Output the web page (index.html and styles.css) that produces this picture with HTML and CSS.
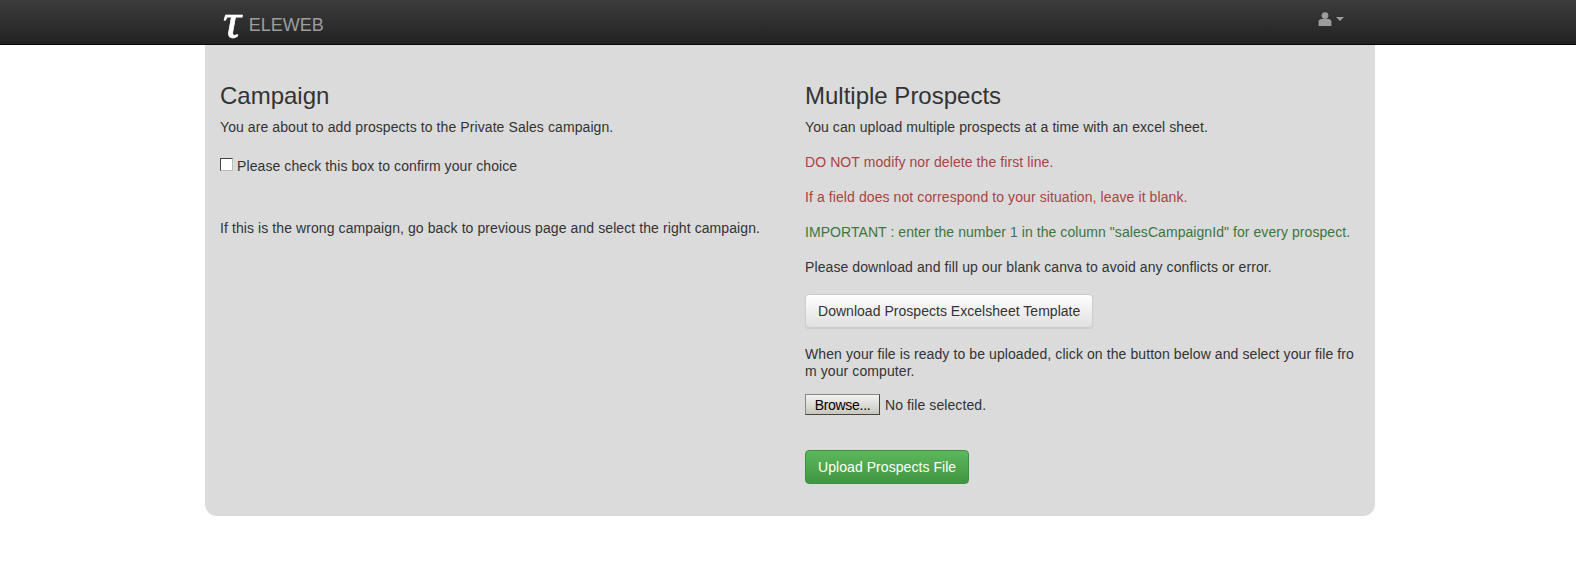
FILE: index.html
```html
<!DOCTYPE html>
<html lang="en">
<head>
<meta charset="utf-8">
<title>Teleweb</title>
<link rel="stylesheet" href="styles.css">
</head>
<body>
<nav class="navbar">
  <div class="nav-inner">
    <a class="brand"><span class="tau">τ</span><span class="brand-text">ELEWEB</span></a>
    <a class="user">
      <svg class="user-icon" viewBox="0 0 14 14" width="14" height="14"><circle cx="7" cy="3.6" r="3.4" fill="#9d9d9d"/><path d="M0.6 14V9.8C0.6 8 2 7 3.6 7h6.8c1.6 0 3 1 3 2.8V14z" fill="#9d9d9d"/></svg>
      <span class="caret"></span>
    </a>
  </div>
</nav>
<main class="panel">
  <section class="col">
    <h3>Campaign</h3>
    <p>You are about to add prospects to the Private Sales campaign.</p>
    <label class="confirm"><input type="checkbox" class="check"><span>Please check this box to confirm your choice</span></label>
    <p class="wrong">If this is the wrong campaign, go back to previous page and select the right campaign.</p>
  </section>
  <section class="col">
    <h3>Multiple Prospects</h3>
    <p>You can upload multiple prospects at a time with an excel sheet.</p>
    <p class="danger">DO NOT modify nor delete the first line.</p>
    <p class="danger">If a field does not correspond to your situation, leave it blank.</p>
    <p class="success">IMPORTANT : enter the number 1 in the column "salesCampaignId" for every prospect.</p>
    <p class="before-btn">Please download and fill up our blank canva to avoid any conflicts or error.</p>
    <button class="btn btn-default">Download Prospects Excelsheet Template</button>
    <p class="ready">When your file is ready to be uploaded, click on the button below and select your file from your computer.</p>
    <div class="file-row"><button class="browse">Browse...</button><span>No file selected.</span></div>
    <button class="btn btn-success">Upload Prospects File</button>
  </section>
</main>
</body>
</html>
```
FILE: styles.css
```css
* { box-sizing: border-box; }
html, body { margin: 0; padding: 0; background: #fff; }
body { font-family: "Liberation Sans", Arial, sans-serif; font-size: 14px; line-height: 20px; color: #333; letter-spacing: .09px; }

.navbar { height: 45px; background: linear-gradient(to bottom, #3c3c3c 0%, #222 100%); border-bottom: 1px solid #080808; }
.nav-inner { width: 1170px; margin-left: 205px; height: 44px; display: flex; justify-content: space-between; }
.brand { display: flex; align-items: flex-start; padding-left: 19px; }
.tau { font-family: "Liberation Serif", serif; font-style: italic; font-size: 44px; line-height: 44px; color: #fff; -webkit-text-stroke: .6px #fff; letter-spacing: 0; transform: scale(1.14); }
.brand-text { font-size: 18px; line-height: 20px; margin: 15px 0 0 9px; color: #9d9d9d; letter-spacing: 0; }
.user { display: flex; align-items: center; height: 38px; padding-right: 31px; gap: 4px; }
.user-icon { display: block; }
.caret { width: 0; height: 0; border-top: 4px solid #9d9d9d; border-left: 4px solid transparent; border-right: 4px solid transparent; }

.panel { width: 1170px; height: 471px; margin-left: 205px; background: #dbdbdb; border-radius: 0 0 12px 12px; display: grid; grid-template-columns: 585px 585px; }
.col { padding: 0 15px; }
h3 { font-size: 24px; line-height: 26px; font-weight: 500; margin: 38px 0 8px; color: #333; letter-spacing: 0; }
p { margin: 0 0 15px; }
.confirm { display: flex; align-items: flex-start; height: 20px; }
.check { appearance: none; width: 13px; height: 13px; margin: 6px 4px 0 0; background: #fff; border: 1px solid; border-color: #444 #bbb #bbb #444; }
.confirm span { margin-top: 4px; }
.wrong { margin-top: 46px; }
.danger { color: #a94442; }
.success { color: #3c763d; letter-spacing: .065px; }
.before-btn { margin-bottom: 17px; }

.btn { display: block; font: inherit; height: 34px; padding: 6px 12px; border-radius: 4px; border: 1px solid transparent; }
.btn-default { color: #333; letter-spacing: .03px; background: linear-gradient(to bottom, #fff 0%, #e0e0e0 100%); border-color: #ccc; box-shadow: 0 1px 1px rgba(0,0,0,.075); }
.btn-success { color: #fff; letter-spacing: .06px; background: linear-gradient(to bottom, #5cb85c 0%, #419641 100%); border-color: #3e8f3e; }
.ready { width: 555px; margin: 18px 0 14px; line-height: 17px; word-break: break-all; }
.file-row { display: flex; align-items: center; gap: 5px; height: 21px; margin-bottom: 35px; }
.browse { font: inherit; letter-spacing: -.3px; width: 75px; height: 21px; padding: 0; color: #000; background: linear-gradient(to bottom, #f2f2f2, #c9c6ba); border: 1px solid; border-color: #888 #444 #444 #888; }
```
